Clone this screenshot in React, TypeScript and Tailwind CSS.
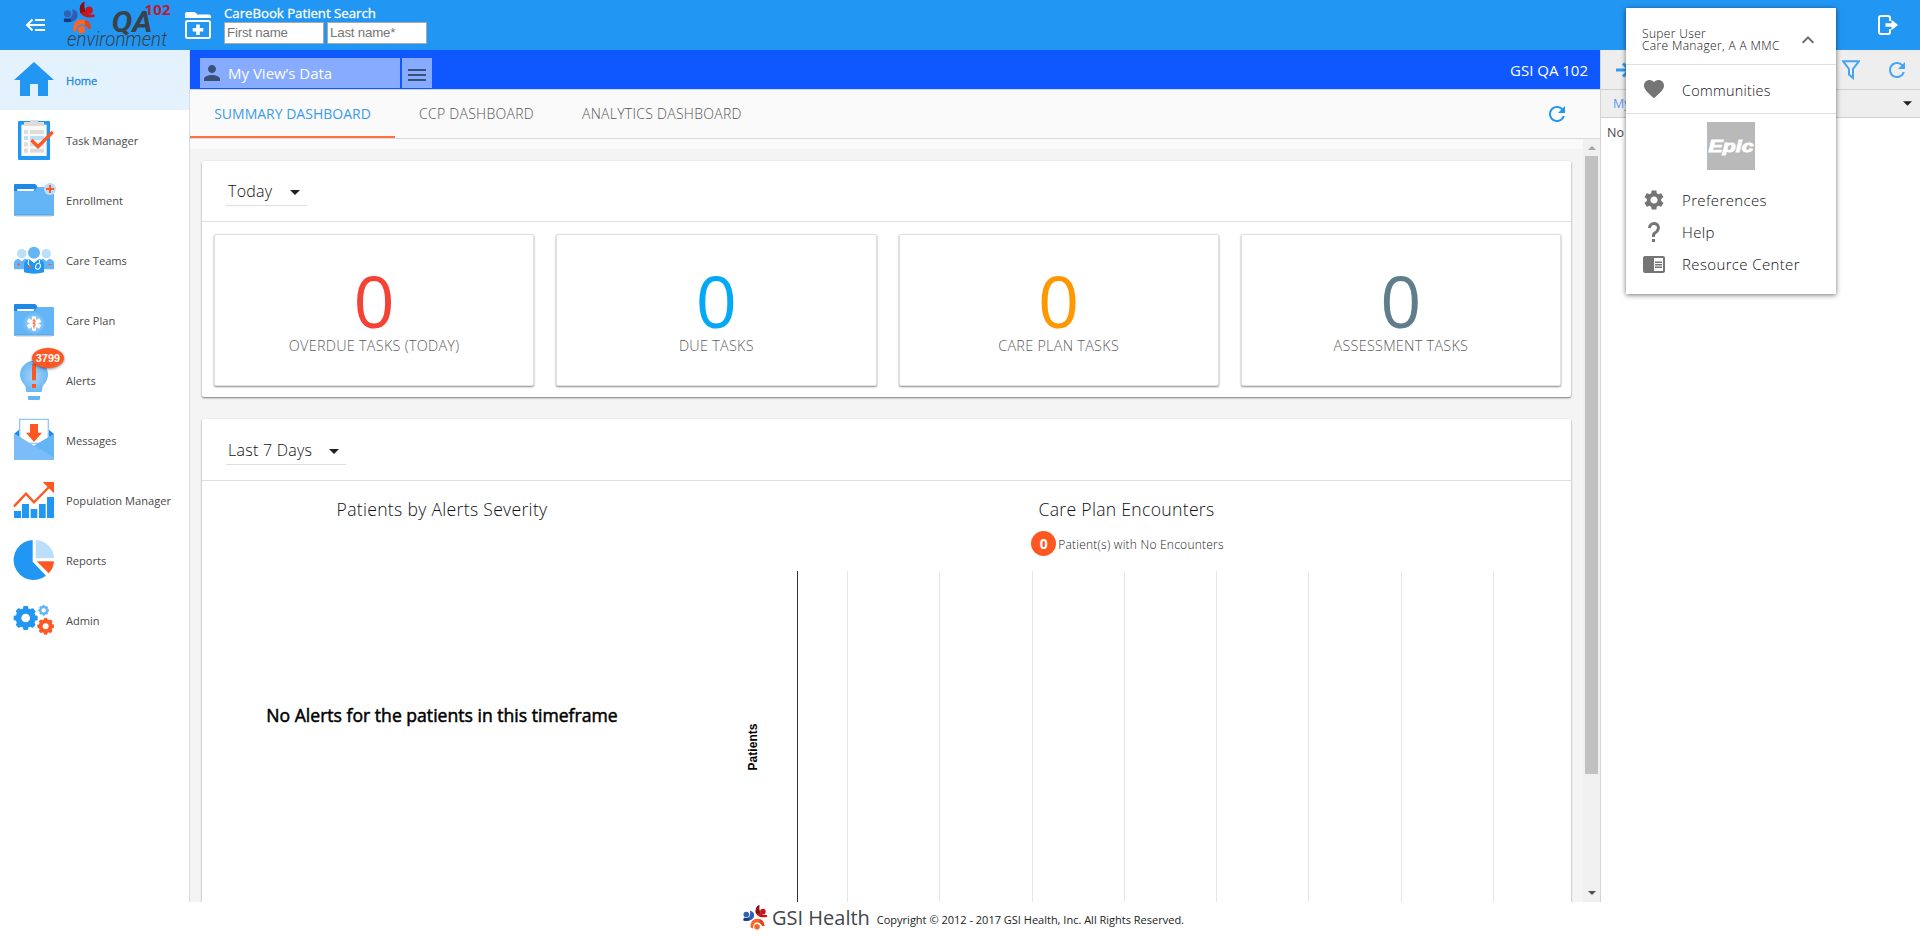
import React from "react";
import {
  MdChromeReaderMode,
  MdExpandLess,
  MdFavorite,
  MdPerson,
  MdRefresh,
  MdSettings,
} from "react-icons/md";

function Figures({ className }: { className?: string }) {
  return (
    <svg viewBox="0 0 96 98" className={className}>
      <circle cx="12" cy="37" r="11" fill="#2f62b5" />
      <path d="M26 23Q46 28 42 46Q35 66 1 61Q0 52 4 50Q19 54 25 44Q30 34 26 23Z" fill="#2f5cb0" />
      <path d="M1 61Q0 52 4 50Q14 53 20 50L24 60Q14 64 1 61Z" fill="#123a86" />
      <circle cx="77" cy="26" r="11" fill="#c4161c" />
      <path d="M62 0Q44 12 50 34Q64 54 94 46Q95 40 90 38Q76 42 68 32Q60 20 62 0Z" fill="#c4161c" />
      <path d="M64 0Q44 8 50 34L66 30Q60 18 64 0Z" fill="#8a0e12" />
      <circle cx="54" cy="85" r="11" fill="#f9662a" />
      <path d="M28 84Q30 54 54 54Q80 54 83 82L74 82Q68 69 54 69Q40 68 38 92Q30 92 28 84Z" fill="#f9662a" />
      <path d="M64 55Q82 60 83 82L74 82Q70 74 64 71Z" fill="#e2431e" />
    </svg>
  );
}

function Gear({ cx, cy, r, hole, fill }: { cx: number; cy: number; r: number; hole: number; fill: string }) {
  const tooth = r * 0.42;
  return (
    <g fill={fill}>
      {[0, 45, 90, 135].map((a) => (
        <rect
          key={a}
          x={cx - tooth / 2}
          y={cy - r}
          width={tooth}
          height={r * 2}
          rx={r * 0.1}
          transform={`rotate(${a} ${cx} ${cy})`}
        />
      ))}
      <circle cx={cx} cy={cy} r={r * 0.84} />
      <circle cx={cx} cy={cy} r={hole} fill="#fff" />
    </g>
  );
}

function Folder() {
  return (
    <>
      <path d="M42 45Q42 42 45 42H104Q109 42 112 51H116V70H42Z" fill="#1e88e5" />
      <path d="M52 57H104L100 64H52Z" fill="#fff" />
      <path d="M42 63H103Q106 63 108 57Q110 51 114 51H160Q162 51 162 54V136H42Z" fill="#64b5f6" />
      <rect x="42" y="133" width="120" height="4" fill="#5aa5e2" />
      <rect x="48" y="137" width="108" height="3" fill="#cfd5da" />
    </>
  );
}

const HomeIcon = (
  <path d="M102 36L162 90H144V138H114V102H90V138H60V90H42Z" fill="#2196f3" />
);

const TaskIcon = (
  <>
    <rect x="54" y="33" width="96" height="117" rx="3" fill="#2196f3" />
    <rect x="64" y="44" width="76" height="94" fill="#fafafa" />
    <path d="M72 36H90V30H114V36H132V48H72Z" fill="#dcdcdc" />
    {[60, 97, 116].map((y) => (
      <g key={y} fill="#dcdcdc">
        <rect x="72" y={y} width="12" height="12" />
        <rect x="90" y={y} width="42" height="12" />
      </g>
    ))}
    <rect x="72" y="78" width="12" height="12" fill="#bbdefb" />
    <rect x="90" y="78" width="42" height="12" fill="#bbdefb" />
    <path d="M94 90L114 110L158 66" fill="none" stroke="#ff5722" strokeWidth="10" />
  </>
);

const EnrollmentIcon = (
  <>
    <Folder />
    <circle cx="150" cy="57" r="18" fill="#bbdefb" />
    <path d="M147 45H153V54H162V60H153V69H147V60H138V54H147Z" fill="#ff5722" />
  </>
);

const TeamsIcon = (
  <>
    <circle cx="65" cy="71" r="14" fill="#bbdefb" />
    <circle cx="139" cy="71" r="14" fill="#bbdefb" />
    <path d="M42 118V98Q44 88 56 86L65 94L74 86H80L72 118Z" fill="#64b5f6" />
    <path d="M162 118V98Q160 88 148 86L139 94L130 86H124L132 118Z" fill="#64b5f6" />
    <circle cx="102" cy="68" r="18" fill="#64b5f6" />
    <path d="M72 127V104Q74 88 88 88L102 98L116 88Q130 88 132 104V127Q118 131 102 131T72 127Z" fill="#2196f3" />
    <path d="M93 89L102 99L111 89Z" fill="#fff" />
    <path d="M86 89L84 102Q90 104 90 110" fill="none" stroke="#fff" strokeWidth="3" />
    <ellipse cx="114" cy="109" rx="7" ry="9" fill="none" stroke="#fff" strokeWidth="3" transform="rotate(25 114 109)" />
    <path d="M118 90L119 99" stroke="#fff" strokeWidth="3" />
    <circle cx="89" cy="110" r="4" fill="#ff5722" />
    <path d="M52 103H60M56 99V107M145 104H155" stroke="#ff5722" strokeWidth="3" />
  </>
);

const PlanIcon = (
  <>
    <defs>
      <radialGradient id="planGlow">
        <stop offset="0" stopColor="#c2e2fc" />
        <stop offset="1" stopColor="#64b5f6" />
      </radialGradient>
    </defs>
    <Folder />
    <circle cx="102" cy="100" r="34" fill="url(#planGlow)" />
    <g fill="#fff">
      {[0, 60, 120].map((a) => (
        <rect key={a} x="96" y="79" width="12" height="43" transform={`rotate(${a} 102 100.5)`} />
      ))}
    </g>
    <path d="M102 86V116M98 91H105V96L98 100H105V106L99 110" fill="none" stroke="#ff7043" strokeWidth="3" />
  </>
);

const AlertsIcon = (
  <>
    <defs>
      <radialGradient id="bulb">
        <stop offset="0" stopColor="#a6d3fa" />
        <stop offset="1" stopColor="#6cb8f6" />
      </radialGradient>
    </defs>
    <path d="M102 32A42 42 0 0 1 144 73Q144 92 131 104Q126 109 126 122Q126 126 122 126H82Q78 126 78 122Q78 109 73 104Q60 92 60 73A42 42 0 0 1 102 32Z" fill="url(#bulb)" />
    <path d="M84 138H120V146Q120 150 116 150H88Q84 150 84 146Z" fill="#64b5f6" />
    <path d="M96 42H108V91H96ZM96 102H108V114H96Z" fill="#ff5722" />
  </>
);

const MessagesIcon = (
  <>
    <path d="M42 72L60 57H144L162 72V100H42Z" fill="#1e88e5" />
    <path d="M59 28H145V100H59Z" fill="#fff" stroke="#90c8f8" strokeWidth="4" />
    <path d="M90 42H114V68H126L102 96L78 68H90Z" fill="#ff5722" />
    <path d="M42 70L102 107L162 72V150H42Z" fill="#7abdf8" />
    <path d="M102 107L162 72V142Z" fill="#64b5f6" />
  </>
);

const PopulationIcon = (
  <>
    <path d="M42 123H63V144H42ZM66 102H87V144H66ZM92 117H112V144H92ZM117 102H137V144H117ZM141 81H162V144H141Z" fill="#2196f3" />
    <path d="M42 109L78 71L102 97L150 48" fill="none" stroke="#ff5722" strokeWidth="7" />
    <path d="M128 36H162V70Z" fill="#ff5722" />
  </>
);

const ReportsIcon = (
  <>
    <path d="M98 30A60 60 0 1 0 138 137L98 95Z" fill="#2196f3" />
    <path d="M107 30A56 56 0 0 1 162 85H107Z" fill="#bbdefb" />
    <path d="M110 94H162A56 56 0 0 1 146 130Z" fill="#ff5722" />
  </>
);

const AdminIcon = (
  <>
    <Gear cx={77} cy={84} r={36} hole={13} fill="#2196f3" />
    <Gear cx={137} cy={109} r={25} hole={9} fill="#ff5722" />
    <Gear cx={131} cy={61} r={16} hole={6.5} fill="#64b5f6" />
  </>
);

const NAV = [
  { label: "Home", icon: HomeIcon, active: true },
  { label: "Task Manager", icon: TaskIcon },
  { label: "Enrollment", icon: EnrollmentIcon },
  { label: "Care Teams", icon: TeamsIcon },
  { label: "Care Plan", icon: PlanIcon },
  { label: "Alerts", icon: AlertsIcon, badge: "3799" },
  { label: "Messages", icon: MessagesIcon },
  { label: "Population Manager", icon: PopulationIcon },
  { label: "Reports", icon: ReportsIcon },
  { label: "Admin", icon: AdminIcon },
];

const TILES = [
  { label: "OVERDUE TASKS (TODAY)", color: "text-[#f44336]" },
  { label: "DUE TASKS", color: "text-[#03a9f4]" },
  { label: "CARE PLAN TASKS", color: "text-[#ff9800]" },
  { label: "ASSESSMENT TASKS", color: "text-[#607d8b]" },
];

function Header() {
  return (
    <header className="flex h-[50px] shrink-0 bg-[#2196f3]">
      <svg viewBox="0 0 20 12" className="mt-[19px] ml-[25px] h-3 w-5" fill="none" stroke="#fff" strokeWidth="2">
        <path d="M10 1H20M2 6H20M10 11H20" />
        <path d="M7.500 0.500L2 6L7.500 11.500" />
      </svg>
      <svg viewBox="0 0 112 50" className="ml-[17px] h-[50px] w-28">
        <svg x="1.500" y="1.500" width="32" height="32.6" viewBox="0 0 96 98">
          <Figures />
        </svg>
        <text x="49.500" y="31.500" fill="#3a4249" fontFamily="Roboto" fontWeight="700" fontStyle="italic" fontSize="30" textLength="41" lengthAdjust="spacingAndGlyphs">QA</text>
        <text x="82.500" y="15" fill="#b71f33" fontFamily="Open Sans" fontWeight="700" fontSize="15" textLength="26">102</text>
        <text x="5" y="46" fill="#3a4249" fontFamily="Roboto" fontWeight="300" fontStyle="italic" fontSize="20" textLength="100" lengthAdjust="spacingAndGlyphs">environment</text>
      </svg>
      <svg viewBox="0 0 26 27" className="mt-3 ml-[11px] h-[27px] w-[26px]">
        <path d="M0 6V2Q0 0 2 0H9Q10.500 0 11.500 1.500L12 2.500H24Q26 2.500 26 4.500V6Z" fill="#fff" />
        <rect x="1" y="9" width="24" height="17" rx="1.500" fill="none" stroke="#fff" strokeWidth="2" />
        <path d="M11.200 12.500H14.800V16H18.300V19.500H14.800V23H11.200V19.500H7.700V16H11.200Z" fill="#fff" />
      </svg>
      <div className="ml-[13px] flex flex-col">
        <div className="mt-[5px] h-[17px] text-[13.2px] leading-4 text-white [-webkit-text-stroke:0.3px_white]">CareBook Patient Search</div>
        <div className="flex gap-[3px] font-['Liberation_Sans',sans-serif] text-[13.3px] text-[#757575]">
          <div className="h-[22px] w-[100px] border border-[#a9a9a9] bg-white pl-[2px] leading-5 tracking-[-0.2px]">First name</div>
          <div className="h-[22px] w-[100px] border border-[#a9a9a9] bg-white pl-[2px] leading-5 tracking-[-0.2px]">Last name*</div>
        </div>
      </div>
      <svg viewBox="0 0 20 20" className="mt-[15px] mr-[22px] ml-auto h-5 w-5" fill="none" stroke="#fff" strokeWidth="2">
        <path d="M12 6V3Q12 1 10 1H3Q1 1 1 3V17Q1 19 3 19H10Q12 19 12 17V14" />
        <path d="M7.500 8.200H13.500V4.800L20 10L13.500 15.200V11.800H7.500Z" fill="#fff" stroke="none" />
      </svg>
    </header>
  );
}

function Sidebar() {
  return (
    <nav className="flex w-[190px] shrink-0 flex-col border-r border-[#dcdcdc] bg-white">
      {NAV.map((n) => (
        <div
          key={n.label}
          className={`relative flex h-[60px] items-center pl-3 text-[11.1px] ${
            n.active ? "bg-[#e3f2fd] text-[#1e88e5] [-webkit-text-stroke:0.3px_#1e88e5]" : "text-[#484848]"
          }`}
        >
          <svg viewBox="36 0 138 180" className="h-[60px] w-[46px]">{n.icon}</svg>
          <span className="mt-[2px] ml-2">{n.label}</span>
          {n.badge && (
            <span className="absolute top-[-2px] left-8 flex h-5 w-8 items-center justify-center rounded-[50%] bg-[#ff5722] font-['Liberation_Sans',sans-serif] text-[11px] font-bold text-white shadow-[0_1px_3px_rgba(0,0,0,0.5)]">
              {n.badge}
            </span>
          )}
        </div>
      ))}
    </nav>
  );
}

function Select({ label, className }: { label: string; className: string }) {
  return (
    <div className={`flex h-7 justify-between border-b border-[#dedede] pr-[7px] pl-[2px] text-[16px] leading-7 font-light tracking-[0.25px] text-[#111] ${className}`}>
      <span className="-mt-px">{label}</span>
      <svg viewBox="0 0 10 5" className="mt-[12px] h-[5px] w-[10px]">
        <path d="M0 0H10L5 5Z" fill="#212121" />
      </svg>
    </div>
  );
}

function Dashboard() {
  return (
    <div className="flex min-h-0 flex-1">
      <div className="flex min-w-0 flex-1 flex-col overflow-hidden">
        <div className="h-[10px] shrink-0 bg-[#fafafa]" />
        <div className="flex flex-1 flex-col bg-[#f4f4f4] pt-3 pr-3 pl-3">
          <section className="h-[236px] shrink-0 rounded-[2px] bg-white shadow-[0_1px_2px_rgba(0,0,0,0.5)]">
            <div className="h-[61px] border-b border-[#dedede] pt-[17px] pl-6">
              <Select label="Today" className="w-[81px]" />
            </div>
            <div className="grid grid-cols-4 gap-[22px] pt-3 pr-[10px] pl-3">
              {TILES.map((t) => (
                <div key={t.label} className="flex h-[152px] flex-col items-center rounded-[2px] border border-[#e0e0e0] bg-white pt-[29px] shadow-[0_1px_2px_rgba(0,0,0,0.45)]">
                  <div className={`text-[72px] leading-[72px] ${t.color}`}>0</div>
                  <div className="text-[14.4px] leading-5 font-light tracking-[0.28px] text-[#5c5c5c]">{t.label}</div>
                </div>
              ))}
            </div>
          </section>
          <section className="mt-[22px] flex h-[600px] shrink-0 flex-col rounded-[2px] bg-white shadow-[0_1px_2px_rgba(0,0,0,0.5)]">
            <div className="h-[62px] shrink-0 border-b border-[#dedede] pt-[18px] pl-6">
              <Select label="Last 7 Days" className="w-[120px]" />
            </div>
            <div className="flex flex-1">
              <div className="flex w-[480px] flex-col items-center">
                <h2 className="mt-4 text-[17.6px] leading-6 font-light tracking-[0.3px] text-[#111]">Patients by Alerts Severity</h2>
                <p className="mt-[182px] text-[17.6px] leading-6 text-black [-webkit-text-stroke:0.5px_black]">
                  No Alerts for the patients in this timeframe
                </p>
              </div>
              <div className="flex flex-1 flex-col items-center">
                <h2 className="mt-4 text-[17.6px] leading-6 font-light tracking-[0.3px] text-[#111]">Care Plan Encounters</h2>
                <div className="mt-[10px] flex h-[25px] items-center gap-[2px] pl-[2px]">
                  <span className="flex h-[25px] w-[25px] items-center justify-center rounded-full bg-[#ff5722] text-[14px] font-bold text-white">0</span>
                  <span className="mt-[3px] text-[12px] font-light tracking-[0.23px] text-[#222]">Patient(s) with No Encounters</span>
                </div>
                <svg viewBox="0 0 889 400" className="mt-[15px] h-[400px] w-[889px]">
                  <path d="M115.500 0V400" stroke="#333" />
                  {[165, 257, 350, 442, 534, 626, 719, 811].map((x) => (
                    <path key={x} d={`M${x + 0.5} 0V400`} stroke="#e6e6e6" />
                  ))}
                  <text transform="translate(75 176) rotate(-90)" textAnchor="middle" fontFamily="Liberation Sans" fontWeight="700" fontSize="12" textLength="47">Patients</text>
                </svg>
              </div>
            </div>
          </section>
        </div>
      </div>
      <div className="flex w-[17px] shrink-0 flex-col items-center bg-[#f0f0f0]">
        <svg viewBox="0 0 8 4" className="mt-[7px] h-1 w-2"><path d="M0 4H8L4 0Z" fill="#a3a3a3" /></svg>
        <div className="mt-[6px] h-[618px] w-[13px] bg-[#c1c1c1]" />
        <svg viewBox="0 0 8 4" className="mt-auto mb-[7px] h-1 w-2"><path d="M0 0H8L4 4Z" fill="#505050" /></svg>
      </div>
    </div>
  );
}

function Main() {
  return (
    <main className="flex min-w-0 flex-1 flex-col">
      <div className="flex h-10 shrink-0 items-start border-b border-[#ccd4e6] bg-[#0f57ff] pl-[10px] text-white">
        <div className="mt-2 flex h-[30px] w-[200px] items-center bg-[#87abff] text-[15px]">
          <MdPerson className="h-6 w-6 text-[#3b5079]" />
          <span className="ml-[4px]">My View’s Data</span>
        </div>
        <div className="mt-2 ml-[2px] flex h-[30px] w-[30px] flex-col items-center gap-[3px] bg-[#87abff] pt-[11px]">
          <div className="h-[2px] w-[18px] bg-[#3b5079]" />
          <div className="h-[2px] w-[18px] bg-[#3b5079]" />
          <div className="h-[2px] w-[18px] bg-[#3b5079]" />
        </div>
        <span className="mt-[10px] mr-3 ml-auto text-[15px] leading-5">GSI QA 102</span>
      </div>
      <div className="flex h-[49px] shrink-0 border-b border-[#dadada] bg-[#fafafa] text-[14px] leading-[47px] font-light tracking-[0.28px] text-[#555]">
        <div className="flex h-12 w-[205px] justify-center border-b-2 border-[#ff7043] font-normal tracking-normal text-[#3a9bec]">SUMMARY DASHBOARD</div>
        <div className="ml-6">CCP DASHBOARD</div>
        <div className="ml-12">ANALYTICS DASHBOARD</div>
        <MdRefresh className="mt-3 mr-[31px] ml-auto h-6 w-6 text-[#2196f3]" />
      </div>
      <Dashboard />
    </main>
  );
}

function SidePanel() {
  return (
    <aside className="flex w-80 shrink-0 flex-col border-l border-[#d4d4d4] bg-white">
      <div className="flex h-10 items-center border-b border-[#cfcfcf] bg-[#eee] pr-[11px] pl-[15px]">
        <svg viewBox="0 0 16 16" className="h-4 w-4" fill="none" stroke="#2f9bf4" strokeWidth="3">
          <path d="M0 8H13M7 1.500L13.500 8L7 14.500" />
        </svg>
        <svg viewBox="0 0 18 20" className="ml-auto h-5 w-[18px]" fill="none" stroke="#42a5f5" strokeWidth="2">
          <path d="M1 1.200H17L11 9V18L7 14.500V9Z" />
        </svg>
        <MdRefresh className="ml-[25px] h-6 w-6 text-[#42a5f5]" />
      </div>
      <div className="flex h-7 items-center justify-between border-b border-[#cfcfcf] bg-[#eee] pr-2 pl-3 text-[12.500px] text-[#5b97fb]">
        <span className="mt-[2px]">My</span>
        <svg viewBox="0 0 10 5" className="h-[5px] w-[9px]"><path d="M0 0H10L5 5Z" fill="#212121" /></svg>
      </div>
      <div className="pt-1 pl-[6px] text-[12.500px] leading-[22px] text-[#484848]">No</div>
    </aside>
  );
}

function UserMenu() {
  return (
    <div className="absolute top-2 left-[1626px] flex h-[286px] w-[210px] flex-col bg-white font-light text-[#111] shadow-[0_1px_5px_rgba(0,0,0,0.55)]">
      <div className="flex h-[57px] shrink-0 justify-between border-b border-[#dedede] pr-4 pl-4 text-[12px] leading-3">
        <div className="pt-[20px] tracking-[0.35px]">
          <div>Super User</div>
          <div>Care Manager, A A MMC</div>
        </div>
        <MdExpandLess className="mt-[20px] h-6 w-6 text-[#6b6b6b]" />
      </div>
      <div className="flex h-[49px] shrink-0 items-center border-b border-[#dedede] pl-4 text-[14.4px]">
        <MdFavorite className="h-6 w-6 text-[#757575]" />
        <span className="mt-[3px] ml-[16px] tracking-[0.28px]">Communities</span>
      </div>
      <div className="mt-2 mb-[14px] flex h-12 w-12 shrink-0 items-center justify-center self-center bg-[#b9b9b9]">
        <svg viewBox="0 0 48 48" className="h-12 w-12">
          <text x="1.500" y="29.500" fill="#fff" stroke="#fff" strokeWidth="0.900" fontFamily="Liberation Sans" fontWeight="700" fontStyle="italic" fontSize="17" textLength="45" lengthAdjust="spacingAndGlyphs">Epic</text>
        </svg>
      </div>
      <div className="flex flex-col text-[15px] tracking-[0.37px]">
        <div className="flex h-8 items-center pl-4">
          <MdSettings className="h-6 w-6 text-[#757575]" />
          <span className="ml-4">Preferences</span>
        </div>
        <div className="flex h-8 items-center pl-4">
          <svg viewBox="0 0 24 24" className="h-6 w-6" fill="#757575">
            <path d="M10,19H13V22H10V19M12,2C17.350,2.220 19.680,7.620 16.500,11.670C15.670,12.670 14.330,13.330 13.670,14.170C13,15 13,16 13,17H10C10,15.330 10,13.920 10.670,12.920C11.330,11.920 12.670,11.330 13.500,10.670C15.920,8.430 15.320,5.260 12,5A3,3 0 0,0 9,8H6A6,6 0 0,1 12,2Z" />
          </svg>
          <span className="ml-4">Help</span>
        </div>
        <div className="flex h-8 items-center pl-4">
          <MdChromeReaderMode className="h-6 w-6 text-[#757575]" />
          <span className="ml-4">Resource Center</span>
        </div>
      </div>
    </div>
  );
}

export default function App() {
  return (
    <div className="relative flex h-[935px] w-[1920px] flex-col overflow-hidden bg-white font-['Open_Sans',sans-serif]">
      <Header />
      <div className="flex h-[852px] shrink-0">
        <Sidebar />
        <Main />
        <SidePanel />
      </div>
      <footer className="flex flex-1 bg-white pl-[743px]">
        <Figures className="mt-[3px] h-[25px] w-[25px]" />
        <span className="mt-[4px] ml-[4px] text-[20px] leading-6 text-[#3f464c]">GSI Health</span>
        <span className="mt-[8px] ml-[7px] text-[11px] leading-5 text-[#222]">
          Copyright © 2012 - 2017 GSI Health, Inc. All Rights Reserved.
        </span>
      </footer>
      <UserMenu />
    </div>
  );
}
